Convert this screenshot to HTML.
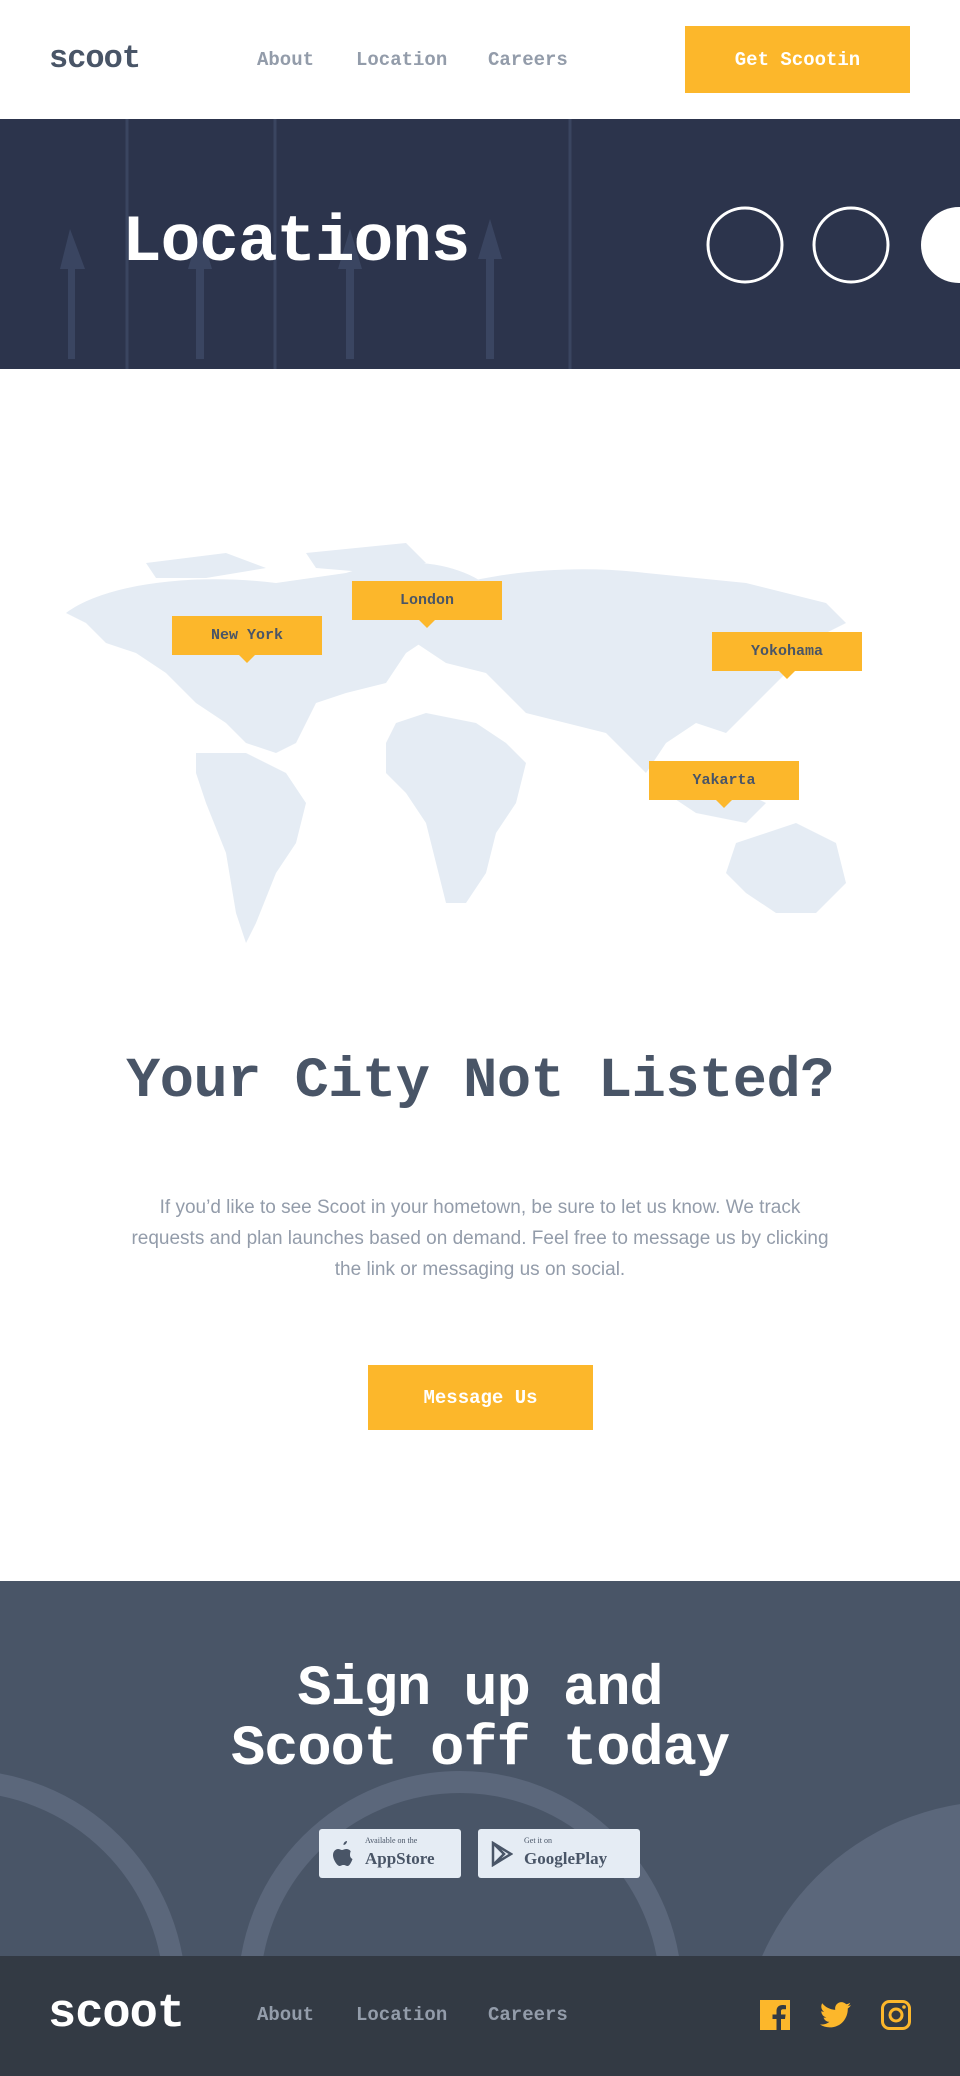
<!DOCTYPE html>
<html style="overflow:hidden"><head><meta charset="utf-8"><style>
*{margin:0;padding:0;box-sizing:border-box}
body{width:960px;height:2076px;position:relative;background:#fff;font-family:"Liberation Mono",monospace;overflow:hidden}
.abs{position:absolute}
.nav a{position:absolute;color:#939caa;font-weight:bold;font-size:19px;text-decoration:none;line-height:20px}
.btn{position:absolute;background:#fcb72b;color:#fff;font-weight:bold;font-size:19px;display:flex;align-items:center;justify-content:center}
.pin{position:absolute;width:150px;height:39px;background:#fcb72b;color:#495567;font-weight:bold;font-size:15px;display:flex;align-items:center;justify-content:center}
.pin:after{content:"";position:absolute;left:67px;bottom:-8px;border-left:8px solid transparent;border-right:8px solid transparent;border-top:8px solid #fcb72b}
.badge{position:absolute;background:#e5ecf4;border-radius:3px;font-family:"Liberation Serif",serif;color:#495567}
</style></head><body>
<div class="abs" style="left:49px;top:40px;font-size:32px;font-weight:bold;color:#495567;letter-spacing:-1px">scoot</div>
<div class="nav"><a style="left:257px;top:50px">About</a><a style="left:356px;top:50px">Location</a><a style="left:488px;top:50px">Careers</a></div>
<div class="btn" style="left:685px;top:26px;width:225px;height:67px">Get Scootin</div>

<div class="abs" style="left:0;top:119px;width:960px;height:250px;background:#2c344c;overflow:hidden">
<svg width="960" height="250" style="position:absolute;left:0;top:0">
<g fill="#3e4a66" opacity=".8">
<path d="M70 110 L60 150 L68 150 L68 240 L75 240 L75 150 L85 150Z"/>
<path d="M200 110 L188 150 L196 150 L196 240 L204 240 L204 150 L212 150Z"/>
<path d="M350 110 L338 150 L346 150 L346 240 L354 240 L354 150 L362 150Z"/>
<path d="M490 100 L478 140 L486 140 L486 240 L494 240 L494 140 L502 140Z"/>
</g>
<g stroke="#3a4560" stroke-width="3"><line x1="127" y1="0" x2="127" y2="250"/><line x1="275" y1="0" x2="275" y2="250"/><line x1="570" y1="0" x2="570" y2="250"/></g>
<circle cx="745" cy="126" r="37" fill="none" stroke="#fff" stroke-width="3"/>
<circle cx="851" cy="126" r="37" fill="none" stroke="#fff" stroke-width="3"/>
<circle cx="959" cy="126" r="38" fill="#fff"/>
</svg>
<div class="abs" style="left:122px;top:88px;font-size:66px;font-weight:bold;color:#fff;letter-spacing:-1px;line-height:72px">Locations</div>
</div>

<svg class="abs" style="left:46px;top:543px" width="860" height="420" viewBox="0 0 860 420">
<g fill="#e5ecf4">
<path d="M20 70 C60 40 150 30 230 40 L300 30 C360 10 420 20 450 50 L440 80 L390 90 L360 110 L340 140 L300 150 L270 160 L250 200 L230 210 L200 200 L180 180 L150 160 L120 130 L90 110 L60 100 L40 80Z"/>
<path d="M150 210 L200 210 L240 230 L260 260 L250 300 L230 330 L210 380 L200 400 L190 370 L180 310 L160 260 L150 230Z"/>
<path d="M350 180 L380 170 L430 180 L460 200 L480 220 L470 260 L450 290 L440 330 L420 360 L400 360 L390 320 L380 280 L360 250 L340 230 L340 200Z"/>
<path d="M360 60 C420 30 520 20 600 30 L700 40 L780 60 L800 80 L760 100 L740 130 L720 150 L700 170 L680 190 L650 180 L620 200 L600 230 L580 210 L560 190 L520 180 L480 170 L460 150 L440 130 L400 120 L370 100 L360 80Z"/>
<path d="M640 230 L680 240 L720 260 L700 280 L650 270 L620 250Z"/>
<path d="M690 300 L750 280 L790 300 L800 340 L770 370 L730 370 L700 350 L680 330Z"/>
<path d="M100 20 L180 10 L220 25 L160 35 L110 35Z"/>
<path d="M260 10 L360 0 L380 20 L330 30 L270 25Z"/>
</g></svg>
<div class="pin" style="left:172px;top:616px">New York</div>
<div class="pin" style="left:352px;top:581px">London</div>
<div class="pin" style="left:712px;top:632px">Yokohama</div>
<div class="pin" style="left:649px;top:761px">Yakarta</div>

<div class="abs" style="left:0;top:1046px;width:960px;text-align:center;font-size:57px;font-weight:bold;color:#495567;letter-spacing:-0.5px;line-height:72px">Your City Not Listed?</div>
<div class="abs" style="left:125px;top:1192px;width:710px;text-align:center;font-family:'Liberation Sans',sans-serif;font-size:19px;line-height:31px;color:#939caa">If you’d like to see Scoot in your hometown, be sure to let us know. We track requests and plan launches based on demand. Feel free to message us by clicking the link or messaging us on social.</div>
<div class="btn" style="left:368px;top:1365px;width:225px;height:65px">Message Us</div>

<div class="abs" style="left:0;top:1581px;width:960px;height:375px;background:#495567;overflow:hidden">
<svg width="960" height="375" style="position:absolute;left:0;top:0">
<circle cx="-40" cy="415" r="215" fill="none" stroke="#5b677b" stroke-width="22"/>
<circle cx="460" cy="412" r="211" fill="none" stroke="#5b677b" stroke-width="22"/>
<circle cx="1000" cy="480" r="260" fill="#5b677b"/>
</svg>
<div class="abs" style="left:0;top:79px;width:960px;text-align:center;font-size:57px;font-weight:bold;color:#fff;line-height:60px;letter-spacing:-1px">Sign up and<br>Scoot off today</div>
<div class="badge" style="left:319px;top:248px;width:142px;height:49px">
<svg class="abs" style="left:13px;top:12px" width="22" height="26" viewBox="0 0 22 26"><path fill="#495567" d="M15 0c0 2-1.5 4-3.5 4C11.3 2 13 0 15 0zM18 14c0 3 2.5 4 2.5 4-1 3-3 7-5 7-1.5 0-2-1-4-1s-2.5 1-4 1C5.5 25 1 19 1 14c0-4 3-6 5-6 1.5 0 3 1 4 1s2.5-1 4.5-1c1 0 3 .5 4.2 2.2C18.5 10.5 18 12 18 14z"/></svg>
<div class="abs" style="left:46px;top:7px;font-size:8px">Available on the</div>
<div class="abs" style="left:46px;top:20px;font-size:17px;font-weight:bold">AppStore</div></div>
<div class="badge" style="left:478px;top:248px;width:162px;height:49px">
<svg class="abs" style="left:13px;top:12px" width="22" height="26" viewBox="0 0 22 26"><path fill="none" stroke="#495567" stroke-width="2.5" d="M2 2 L20 13 L2 24Z M2 2 L13 13 L2 24"/></svg>
<div class="abs" style="left:46px;top:7px;font-size:8px">Get it on</div>
<div class="abs" style="left:46px;top:20px;font-size:17px;font-weight:bold">GooglePlay</div></div>
</div>

<div class="abs" style="left:0;top:1956px;width:960px;height:120px;background:#333a44">
<div class="abs" style="left:48px;top:32px;font-size:47px;font-weight:bold;color:#fff;letter-spacing:-1px;line-height:54px">scoot</div>
<div class="nav"><a style="left:257px;top:49px">About</a><a style="left:356px;top:49px">Location</a><a style="left:488px;top:49px">Careers</a></div>
<svg class="abs" style="left:760px;top:44px" width="30" height="30" viewBox="0 0 30 30"><rect width="30" height="30" fill="#fcb72b"/><path d="M21 30V19h4l.6-4.5H21v-3c0-1.3.4-2.2 2.3-2.2H26V5.3C25.5 5.2 24 5 22.5 5 19 5 16.5 7 16.5 11v3.5h-4V19h4v11z" fill="#333a44"/></svg>
<svg class="abs" style="left:820px;top:46px" width="31" height="26" viewBox="0 0 24 20"><path fill="#fcb72b" d="M24 2.4c-.9.4-1.8.7-2.8.8 1-.6 1.8-1.6 2.2-2.7-1 .6-2 1-3.1 1.2C19.3.7 18 0 16.6 0c-2.7 0-4.9 2.2-4.9 4.9 0 .4 0 .8.1 1.1C7.7 5.8 4.1 3.9 1.7.9c-.4.7-.7 1.6-.7 2.5 0 1.7.9 3.2 2.2 4.1-.8 0-1.6-.2-2.2-.6v.1c0 2.4 1.7 4.4 3.9 4.8-.4.1-.8.2-1.3.2-.3 0-.6 0-.9-.1.6 2 2.4 3.4 4.6 3.4-1.7 1.3-3.8 2.1-6.1 2.1H0c2.2 1.4 4.8 2.2 7.5 2.2 9.1 0 14-7.5 14-14v-.6c1-.7 1.8-1.6 2.5-2.6z"/></svg>
<svg class="abs" style="left:881px;top:44px" width="30" height="30" viewBox="0 0 30 30"><rect x="1.5" y="1.5" width="27" height="27" rx="7" fill="none" stroke="#fcb72b" stroke-width="3"/><circle cx="15" cy="15" r="6" fill="none" stroke="#fcb72b" stroke-width="3"/><circle cx="23" cy="7" r="1.8" fill="#fcb72b"/></svg>
</div>
</body></html>
